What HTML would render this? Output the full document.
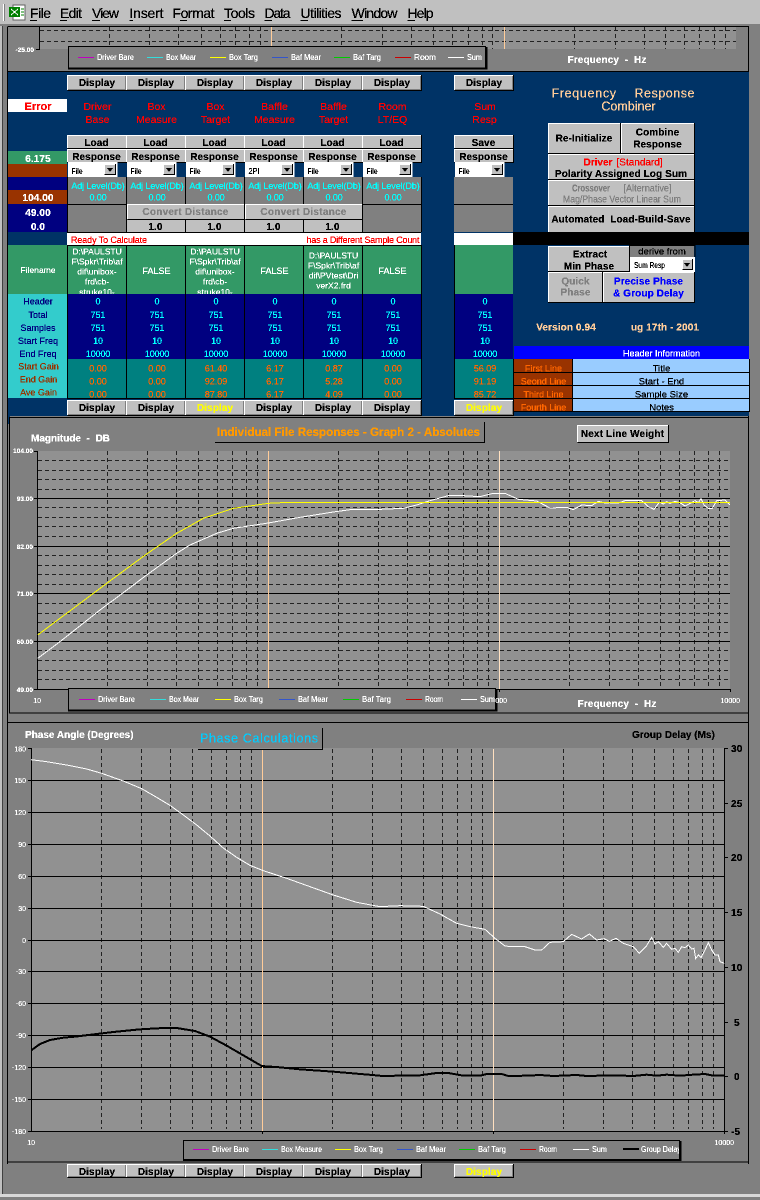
<!DOCTYPE html>
<html><head><meta charset="utf-8"><style>
html,body{margin:0;padding:0;background:#808080}
svg{display:block}
text{font-family:"Liberation Sans",sans-serif;font-size:10px;white-space:pre}
.m{font-size:14px;fill:#000}
.b{font-weight:bold;letter-spacing:.1px;text-anchor:middle;fill:#000}
.bl{font-weight:bold;fill:#000}
.r{fill:#ff0000;text-anchor:middle;font-size:10.5px}
.c{fill:#00ffff;text-anchor:middle;font-size:9px;letter-spacing:-.1px}
.w{fill:#fff;text-anchor:middle;font-size:8.5px}
.wb{fill:#fff;text-anchor:middle;font-weight:bold;letter-spacing:.1px}
.nv{fill:#000080;text-anchor:middle;font-size:9px}
.br{fill:#993300;text-anchor:middle;font-size:9px}
.o{fill:#ff6600;text-anchor:middle;font-size:9px}
.k{fill:#000;text-anchor:middle;font-size:9.500px}
.s{fill:#fff;font-size:6.500px;font-weight:bold}
.sa{fill:#fff;font-size:6.500px;font-weight:bold;text-anchor:end}
.l{fill:#fff;font-size:8px}
.f{fill:#000;font-size:8.500px}
.ax{fill:#fff;font-size:7px;text-anchor:end}
.rx{fill:#000;font-size:10px;font-weight:bold;letter-spacing:.2px}
</style></head><body>
<svg xmlns="http://www.w3.org/2000/svg" width="760" height="1200" viewBox="0 0 760 1200" shape-rendering="crispEdges">
<defs>
<filter id="crisp" x="0" y="0" width="760" height="1200" filterUnits="userSpaceOnUse" color-interpolation-filters="sRGB"><feComponentTransfer><feFuncA type="discrete" tableValues="0 1 1 1"/></feComponentTransfer></filter>
<clipPath id="fn"><rect x="67" y="245" width="354" height="49"/></clipPath>
<clipPath id="lg3"><rect x="183" y="1140" width="496" height="20"/></clipPath>
<g id="d"><rect width="59" height="15" fill="#c0c0c0"/><path d="M.5 15V.5H59" stroke="#fff" fill="none"/><path d="M.5 15.5H59.5V0" stroke="#000" fill="none"/><path d="M1 14.5H58.5V1" stroke="#808080" fill="none"/></g>
<g id="d2"><rect width="59" height="13" fill="#c0c0c0"/><path d="M.5 13V.5H59" stroke="#fff" fill="none"/><path d="M.5 13.5H59.5V0" stroke="#000" fill="none"/><path d="M1 12.500H58.5V1" stroke="#808080" fill="none"/></g>
<g id="l"><rect width="59" height="13" fill="#c0c0c0"/><path d="M.5 13V.5H59" stroke="#fff" fill="none"/><path d="M.5 13.5H59.5V0" stroke="#000" fill="none"/></g>
<g id="dd"><rect width="49.500" height="15" fill="#fff"/><rect x="36" y="2" width="11.500" height="11" fill="#c0c0c0"/><path d="M36.500 13V2.500H47" stroke="#fff" fill="none"/><path d="M36.500 12.500H47.500V2" stroke="#000" fill="none"/><path d="M39 6H45L42 10Z" fill="#000"/></g>
</defs>

<!-- base -->
<rect width="760" height="1200" fill="#808080"/>
<rect width="760" height="24" fill="#c0c0c0"/>
<rect y="24" width="760" height="2" fill="#808080"/>
<rect x="0" y="26" width="2" height="1168" fill="#c0c0c0"/>
<path d="M2.500 26V1194" stroke="#404040"/>
<path d="M7.500 27V1164" stroke="#000"/>
<path d="M7.500 26.500H749" stroke="#000"/>
<path d="M748.500 27V1164" stroke="#000"/>
<rect x="0" y="1194" width="760" height="3" fill="#d8d8d8"/>
<rect x="0" y="1197" width="760" height="3" fill="#808080"/>
<!-- grip + icon -->
<path d="M3.500 4V21" stroke="#fff"/><path d="M4.500 4V21" stroke="#808080"/>
<rect x="13" y="5" width="12" height="15" fill="#fff" stroke="#606060"/>
<rect x="9" y="7" width="11" height="10" fill="#008000"/>
<path d="M11 9L18 15M18 9L11 15" stroke="#fff" fill="none"/>
<path d="M21 9H24M21 12H24M21 15H24" stroke="#008000"/>

<!-- top chart -->
<rect x="40" y="27" width="696" height="22" fill="#919191"/>
<path d="M40 30.500H736M40 41.500H736" stroke="#222" stroke-dasharray="4 3"/>
<path d="M109.500 27V49M149.500 27V49M178.500 27V49M201.500 27V49M220.500 27V49M235.500 27V49M249.500 27V49M260.500 27V49M341.500 27V49M382.500 27V49M411.500 27V49M433.500 27V49M452.500 27V49M468.500 27V49M482.500 27V49M492.500 27V49M574.500 27V49M615.500 27V49M644.500 27V49M665.500 27V49M684.500 27V49M699.500 27V49M714.500 27V49M725.500 27V49" stroke="#222" stroke-dasharray="4 3"/>
<path d="M271.500 27V46M504.500 27V49" stroke="#ffcc99"/>
<path d="M39.500 27V49.500H36" stroke="#000" fill="none"/>
<rect x="68.500" y="46.500" width="417" height="22" fill="#808080" stroke="#000" stroke-width="1"/>
<path d="M68 68.500H486.500V47" stroke="#000" stroke-width="2" fill="none"/>
<g stroke-width="1" fill="none">
<path d="M78 57.500H94" stroke="#c000c0"/><path d="M147 57.500H163" stroke="#33dddd"/><path d="M210 57.500H226" stroke="#ffff00"/><path d="M272 57.500H288" stroke="#3355cc"/><path d="M334 57.500H350" stroke="#00cc00"/><path d="M395 57.500H411" stroke="#cc0000"/><path d="M448 57.500H464" stroke="#fff"/>
</g>
<path d="M8 71.500H749" stroke="#000"/>

<!-- navy panel -->
<rect x="8" y="72" width="741" height="344" fill="#003366"/>
<rect x="8" y="416" width="2" height="8" fill="#003366"/>

<!-- display row -->
<use href="#d" x="67" y="75"/><use href="#d" x="126" y="75"/><use href="#d" x="185" y="75"/><use href="#d" x="244" y="75"/><use href="#d" x="303" y="75"/><use href="#d" x="362" y="75"/><use href="#d" x="454" y="75"/>
<rect x="8" y="99" width="59" height="13" fill="#fff"/>

<!-- load / response -->
<use href="#l" x="67" y="135"/><use href="#l" x="126" y="135"/><use href="#l" x="185" y="135"/><use href="#l" x="244" y="135"/><use href="#l" x="303" y="135"/><use href="#l" x="362" y="135"/><use href="#l" x="454" y="135"/>
<use href="#l" x="67" y="149"/><use href="#l" x="126" y="149"/><use href="#l" x="185" y="149"/><use href="#l" x="244" y="149"/><use href="#l" x="303" y="149"/><use href="#l" x="362" y="149"/><use href="#l" x="454" y="149"/>
<use href="#dd" x="68" y="162"/><use href="#dd" x="127" y="162"/><use href="#dd" x="186" y="162"/><use href="#dd" x="245" y="162"/><use href="#dd" x="304" y="162"/><use href="#dd" x="363" y="162"/><use href="#dd" x="455" y="162"/>

<!-- left column -->
<rect x="8" y="151" width="59" height="13" fill="#339966"/>
<rect x="8" y="164" width="59" height="13" fill="#993300"/>
<rect x="8" y="177" width="59" height="13" fill="#000080"/>
<rect x="8" y="190" width="59" height="14" fill="#993300"/>
<rect x="8" y="204" width="59" height="28" fill="#000080"/>
<rect x="8" y="245" width="59" height="49" fill="#339966"/>
<rect x="8" y="294" width="59" height="104" fill="#33cccc"/>

<!-- adj level -->
<rect x="67" y="177" width="354" height="55" fill="#808080"/>
<rect x="454" y="177" width="59" height="55" fill="#808080"/>
<path d="M126.500 177V204M185.500 177V204M244.500 177V204M303.500 177V204M362.500 177V204M67.500 177V232M421.500 177V232M67 204.500H127M362 204.500H422M454 204.500H513" stroke="#000"/>
<rect x="127" y="204" width="117" height="15" fill="#c0c0c0"/><path d="M127.500 219V204.500H244" stroke="#fff" fill="none"/><path d="M127.500 219.500H244.500V204" stroke="#000" fill="none"/>
<rect x="245" y="204" width="117" height="15" fill="#c0c0c0"/><path d="M245.500 219V204.500H362" stroke="#fff" fill="none"/><path d="M245.500 219.500H362.500V204" stroke="#000" fill="none"/>
<rect x="127" y="220" width="235" height="12" fill="#c0c0c0"/>
<path d="M126.500 204V232M185.500 220V232M244.500 220V232M303.500 220V232M362.500 204V232" stroke="#000"/>

<!-- status row -->
<path d="M67 232.500H421" stroke="#000"/>
<rect x="67" y="233" width="354" height="12" fill="#fff"/>
<rect x="454" y="233" width="59" height="12" fill="#fff"/>
<rect x="513" y="232" width="236" height="13" fill="#000"/>

<!-- data table -->
<rect x="67" y="245" width="354" height="49" fill="#339966"/>
<rect x="67" y="294" width="354" height="65" fill="#000080"/>
<rect x="67" y="359" width="354" height="39" fill="#008080"/>
<path d="M67.500 245V398M126.500 245V398M185.500 245V398M244.500 245V398M303.500 245V398M362.500 245V398M421.500 245V399M67 245.500H422M67 398.500H422" stroke="#000"/>
<rect x="454" y="245" width="59" height="49" fill="#339966"/>
<rect x="454" y="294" width="59" height="65" fill="#000080"/>
<rect x="454" y="359" width="59" height="39" fill="#008080"/>
<path d="M454.500 245V398M454 398.500H514" stroke="#000"/>
<use href="#d" x="67" y="400"/><use href="#d" x="126" y="400"/><use href="#d" x="185" y="400"/><use href="#d" x="244" y="400"/><use href="#d" x="303" y="400"/><use href="#d" x="362" y="400"/><use href="#d" x="454" y="400"/>

<!-- right buttons -->
<g fill="#c0c0c0">
<rect x="548" y="123" width="72" height="30"/><rect x="621" y="123" width="73" height="30"/>
<rect x="548" y="154" width="146" height="25"/><rect x="548" y="180" width="146" height="25"/><rect x="548" y="206" width="146" height="26"/>
<rect x="548" y="246" width="81" height="25"/><rect x="629" y="245" width="65" height="12" fill="#808080"/>
<rect x="548" y="272" width="54" height="30"/><rect x="603" y="272" width="91" height="30"/>
</g>
<path d="M548.500 153V123.500H620M621.500 153V123.500H694M548.500 179V154.500H694M548.500 205V180.500H694M548.500 232V206.500H694M548.500 271V246.500H629M548.500 302V272.500H602M603.500 302V272.500H694" stroke="#fff" fill="none"/>
<path d="M620.500 123V153.500H548M694.500 123V153.500H621M694.500 154V179.500H548M694.500 180V205.500H548M694.500 206V232M694.500 272V302.500H603M602.500 272V302.500H548M629.500 246V271.500H548M629 245.500H695V257M629.500 245V257" stroke="#000" fill="none"/>
<rect x="630" y="257" width="65" height="15" fill="#fff"/>
<rect x="682" y="259" width="10" height="10" fill="#c0c0c0"/><path d="M682.500 269V259.500H692" stroke="#fff" fill="none"/><path d="M682.500 269.500H692.500V259" stroke="#000" fill="none"/><path d="M684 263H690L687 267Z" fill="#000"/>

<!-- header info -->
<rect x="514" y="346" width="235" height="13" fill="#0000ff"/>
<rect x="514" y="359" width="58" height="52" fill="#993300"/>
<rect x="573" y="359" width="176" height="52" fill="#99ccff"/>
<path d="M513.500 359V412M572.500 359V412M749.500 359V412M514 372.500H750M514 385.500H750M514 398.500H750M514 411.500H750" stroke="#000"/>
<path d="M513.500 398V416" stroke="#000"/>

<!-- chart 1 panel -->
<rect x="9.500" y="417.500" width="739" height="295.500" fill="#808080" stroke="#000"/>
<path d="M215 442.500H484.500V422" stroke="#000" fill="none"/>
<rect x="577" y="425" width="91" height="17" fill="#c0c0c0"/><path d="M577.500 442V425.500H668" stroke="#fff" fill="none"/><path d="M577.500 442.500H668.500V425" stroke="#000" fill="none"/>
<rect x="38" y="451" width="692" height="238" fill="#919191"/>
<path d="M38 460.500H730M38 470.500H730M38 479.500H730M38 489.500H730M38 507.500H730M38 517.500H730M38 526.500H730M38 536.500H730M38 555.500H730M38 565.500H730M38 574.500H730M38 584.500H730M38 603.500H730M38 613.500H730M38 622.500H730M38 632.500H730M38 650.500H730M38 660.500H730M38 670.500H730M38 679.500H730" stroke="#222" stroke-dasharray="4 3"/>
<path d="M107.500 451V689M147.500 451V689M176.500 451V689M198.500 451V689M217.500 451V689M232.500 451V689M246.500 451V689M257.500 451V689M338.500 451V689M378.500 451V689M407.500 451V689M429.500 451V689M448.500 451V689M463.500 451V689M477.500 451V689M488.500 451V689M569.500 451V689M609.500 451V689M638.500 451V689M660.500 451V689M679.500 451V689M694.500 451V689M708.500 451V689M719.500 451V689" stroke="#222" stroke-dasharray="4 3"/>
<path d="M38 498.500H730M38 546.500H730M38 593.500H730M38 641.500H730" stroke="#000"/>
<path d="M268.500 451V688" stroke="#ffcc99"/><path d="M499.500 451V689" stroke="#ffe0c0"/>
<path d="M37.500 451V690M34 451.500H38M34 689.500H38M34 498.500H38M34 546.500H38M34 593.500H38M34 641.500H38M38 689.500H730.500M730.500 689V692M499.500 689V692" stroke="#000" fill="none"/>
<g transform="translate(0,440) scale(.33333)" fill="none" stroke-width="1">
<path vector-effect="non-scaling-stroke" stroke="#fff" d="M113 655L180 605L300 510L370 458L440 405L530 340L570 315L650 280L700 265L805 249L900 232L1000 216L1050 209L1140 208"/>
<path vector-effect="non-scaling-stroke" stroke="#fff" transform="translate(1140,0)" d="M0 208L70 205L110 195L150 182L205 167L250 167L300 170L340 160L375 160L415 178L470 183L510 204L560 202L580 209L605 195L635 197L655 184L675 189L715 189L735 182L785 182L805 200L822 208L838 187L850 192L860 185L870 190L885 184L900 188L915 198L925 193L945 182L955 188L963 176L972 195L985 205L997 205L1010 182L1035 180L1050 195"/>
<path vector-effect="non-scaling-stroke" stroke="#ffff00" d="M113 585L200 520L320 430L440 342L530 280L610 235L700 205L805 190L865 187L2190 187"/>
</g>
<rect x="68.500" y="688.500" width="427" height="22" fill="#808080" stroke="#000"/>
<path d="M68 710.500H496.500V689" stroke="#000" stroke-width="2" fill="none"/>
<path d="M79 699.500H95" stroke="#c000c0"/><path d="M150 699.500H166" stroke="#33dddd"/><path d="M215 699.500H231" stroke="#ffff00"/><path d="M279 699.500H295" stroke="#3355cc"/><path d="M343 699.500H359" stroke="#00cc00"/><path d="M406 699.500H422" stroke="#cc0000"/><path d="M461 699.500H477" stroke="#fff"/>

<!-- chart 2 panel -->
<rect x="7.500" y="722.500" width="741" height="439.500" fill="#808080" stroke="#000"/>
<rect x="32" y="748" width="692" height="383" fill="#919191"/>
<path d="M101.500 749V1129M141.500 749V1129M170.500 749V1129M192.500 749V1129M211.500 749V1129M226.500 749V1129M240.500 749V1129M251.500 749V1129M332.500 749V1129M372.500 749V1129M401.500 749V1129M423.500 749V1129M442.500 749V1129M457.500 749V1129M471.500 749V1129M482.500 749V1129M563.500 749V1129M603.500 749V1129M632.500 749V1129M654.500 749V1129M673.500 749V1129M688.500 749V1129M702.500 749V1129M713.500 749V1129" stroke="#222" stroke-dasharray="4 3"/>
<path d="M32 780.500H724M32 812.500H724M32 844.500H724M32 876.500H724M32 908.500H724M32 940.500H724M32 971.500H724M32 1003.500H724M32 1035.500H724M32 1067.500H724M32 1099.500H724" stroke="#000"/>
<path d="M262.500 749V1131" stroke="#ffcc99"/><path d="M493.500 749V1131" stroke="#ffe0c0"/>
<path d="M31.500 748V1132M28 748.500H32M28 780.500H32M28 812.500H32M28 844.500H32M28 876.500H32M28 908.500H32M28 940.500H32M28 971.500H32M28 1003.500H32M28 1035.500H32M28 1067.500H32M28 1099.500H32M28 1131.500H724.500M724.500 748V1134M724 748.500H728M724 803.500H728M724 857.500H728M724 912.500H728M724 967.500H728M724 1022.500H728M724 1076.500H728M724 1131.500H728M262.500 1131V1134M493.500 1131V1134" stroke="#000" fill="none"/>
<path d="M198 749.500H322.500V728" stroke="#000" fill="none"/>
<g transform="translate(0,720) scale(.33333)" fill="none">
<path vector-effect="non-scaling-stroke" stroke="#fff" d="M93 119L140 125L200 135L260 147L305 160L370 183L425 206L470 232L510 256L550 285L590 315L630 348L670 384L710 412L750 436L790 452L860 475L930 500L1000 525L1070 547L1140 560"/>
<path vector-effect="non-scaling-stroke" stroke="#fff" transform="translate(1140,0)" d="M0 560L60 557L130 559L180 582L230 610L270 620L315 628L345 655L375 678L395 680L435 680L465 690L485 690L510 667L550 665L575 643L605 657L628 642L650 660L672 656L688 664L708 655L730 670L760 680L778 700L798 680L815 652L825 672L835 665L850 682L860 670L875 688L885 685L895 697L905 680L915 683L925 675L935 687L942 685L947 716L955 705L963 713L975 690L985 668L995 690L1005 705L1015 705L1020 725L1033 730"/>
</g>
<g transform="translate(0,980) scale(.33333)" fill="none">
<path vector-effect="non-scaling-stroke" stroke="#000" stroke-width="2" d="M95 210L120 192L150 180L190 173L225 170L265 165L340 156L420 148L490 144L530 144L585 153L630 170L680 197L730 226L785 258L840 262L900 268L1000 275L1140 287"/>
<path vector-effect="non-scaling-stroke" stroke="#000" stroke-width="2" transform="translate(1140,0)" d="M0 288L120 286L170 279L205 279L250 287L300 287L320 282L365 282L385 288L440 287L480 285L520 288L590 285L620 288L700 286L760 288L800 284L830 287L860 284L900 287L940 284L975 282L1000 287L1033 287"/>
</g>
<rect x="183.500" y="1140.500" width="496" height="19" fill="#808080" stroke="#000"/>
<path d="M183 1160H680.500V1141" stroke="#000" stroke-width="2" fill="none"/>
<path d="M193 1149.500H209" stroke="#c000c0"/><path d="M262 1149.500H278" stroke="#33dddd"/><path d="M335 1149.500H351" stroke="#ffff00"/><path d="M397 1149.500H413" stroke="#3355cc"/><path d="M459 1149.500H475" stroke="#00cc00"/><path d="M520 1149.500H536" stroke="#cc0000"/><path d="M573 1149.500H589" stroke="#fff"/><path d="M623 1149H639" stroke="#000" stroke-width="2"/>

<use href="#d2" x="67" y="1164"/><use href="#d2" x="126" y="1164"/><use href="#d2" x="185" y="1164"/><use href="#d2" x="244" y="1164"/><use href="#d2" x="303" y="1164"/><use href="#d2" x="362" y="1164"/><use href="#d2" x="454" y="1164"/>

<!-- TEXT -->
<g filter="url(#crisp)" shape-rendering="auto">
<text class="m" x="30" y="18" textLength="21">File</text>
<text class="m" x="60" y="18" textLength="22">Edit</text>
<text class="m" x="92" y="18" textLength="27">View</text>
<text class="m" x="129.500" y="18" textLength="34">Insert</text>
<text class="m" x="172.500" y="18" textLength="42">Format</text>
<text class="m" x="224" y="18" textLength="31">Tools</text>
<text class="m" x="264.500" y="18" textLength="26">Data</text>
<text class="m" x="300.500" y="18" textLength="41">Utilities</text>
<text class="m" x="351.500" y="18" textLength="46">Window</text>
<text class="m" x="407.500" y="18" textLength="26">Help</text>

<text class="sa" x="34" y="52">-25.00</text>
<g lengthAdjust="spacingAndGlyphs">
<text class="l" x="97" y="60" textLength="37" lengthAdjust="spacingAndGlyphs">Driver Bare</text><text class="l" x="166" y="60" textLength="30" lengthAdjust="spacingAndGlyphs">Box Mear</text><text class="l" x="229" y="60" textLength="29" lengthAdjust="spacingAndGlyphs">Box Targ</text><text class="l" x="291" y="60" textLength="30" lengthAdjust="spacingAndGlyphs">Baf Mear</text><text class="l" x="353" y="60" textLength="28" lengthAdjust="spacingAndGlyphs">Baf Targ</text><text class="l" x="414" y="60" textLength="22" lengthAdjust="spacingAndGlyphs">Room</text><text class="l" x="467" y="60" textLength="15" lengthAdjust="spacingAndGlyphs">Sum</text>
</g>
<text class="wb" x="607" y="63">Frequency  -  Hz</text>

<text class="b" x="97" y="86">Display</text><text class="b" x="156" y="86">Display</text><text class="b" x="215" y="86">Display</text><text class="b" x="274" y="86">Display</text><text class="b" x="333" y="86">Display</text><text class="b" x="392" y="86">Display</text><text class="b" x="484" y="86">Display</text>

<text x="38" y="110" style="font-weight:bold;font-size:11px;fill:#f00;text-anchor:middle">Error</text>
<text class="r" x="97.500" y="110">Driver</text><text class="r" x="97.500" y="123">Base</text>
<text class="r" x="156.500" y="110">Box</text><text class="r" x="156.500" y="123">Measure</text>
<text class="r" x="215.500" y="110">Box</text><text class="r" x="215.500" y="123">Target</text>
<text class="r" x="274.500" y="110">Baffle</text><text class="r" x="274.500" y="123">Measure</text>
<text class="r" x="333.500" y="110">Baffle</text><text class="r" x="333.500" y="123">Target</text>
<text class="r" x="392.500" y="110">Room</text><text class="r" x="392.500" y="123">LT/EQ</text>
<text class="r" x="485" y="110">Sum</text><text class="r" x="484.500" y="123">Resp</text>

<text class="b" x="96.500" y="146">Load</text><text class="b" x="155.500" y="146">Load</text><text class="b" x="214.500" y="146">Load</text><text class="b" x="273.500" y="146">Load</text><text class="b" x="332.500" y="146">Load</text><text class="b" x="391.500" y="146">Load</text><text class="b" x="483.500" y="146">Save</text>
<text class="b" x="96.500" y="160">Response</text><text class="b" x="155.500" y="160">Response</text><text class="b" x="214.500" y="160">Response</text><text class="b" x="273.500" y="160">Response</text><text class="b" x="332.500" y="160">Response</text><text class="b" x="391.500" y="160">Response</text><text class="b" x="483.500" y="160">Response</text>
<text class="f" x="71.500" y="174" textLength="11" lengthAdjust="spacingAndGlyphs">File</text><text class="f" x="130.500" y="174" textLength="11" lengthAdjust="spacingAndGlyphs">File</text><text class="f" x="189.500" y="174" textLength="11" lengthAdjust="spacingAndGlyphs">File</text><text class="f" x="248.500" y="174" textLength="11" lengthAdjust="spacingAndGlyphs">2PI</text><text class="f" x="307.500" y="174" textLength="11" lengthAdjust="spacingAndGlyphs">File</text><text class="f" x="366.500" y="174" textLength="11" lengthAdjust="spacingAndGlyphs">File</text><text class="f" x="458.500" y="174" textLength="11" lengthAdjust="spacingAndGlyphs">File</text>

<text class="wb" x="38" y="162">6.175</text><text class="wb" x="38" y="201">104.00</text><text class="wb" x="38" y="216">49.00</text><text class="wb" x="38" y="230">0.0</text>

<text class="c" x="98" y="189">Adj Level(Db)</text><text class="c" x="157" y="189">Adj Level(Db)</text><text class="c" x="216" y="189">Adj Level(Db)</text><text class="c" x="275" y="189">Adj Level(Db)</text><text class="c" x="334" y="189">Adj Level(Db)</text><text class="c" x="393" y="189">Adj Level(Db)</text>
<text class="c" x="98" y="200.500">0.00</text><text class="c" x="157" y="200.500">0.00</text><text class="c" x="216" y="200.500">0.00</text><text class="c" x="275" y="200.500">0.00</text><text class="c" x="334" y="200.500">0.00</text><text class="c" x="393" y="200.500">0.00</text>
<text class="b" x="185.500" y="215" style="fill:#808080;letter-spacing:.25px">Convert Distance</text><text class="b" x="303.500" y="215" style="fill:#808080;letter-spacing:.25px">Convert Distance</text>
<text class="b" x="155.500" y="230">1.0</text><text class="b" x="214.500" y="230">1.0</text><text class="b" x="273.500" y="230">1.0</text><text class="b" x="332.500" y="230">1.0</text>

<text x="71" y="243" style="fill:#f00;font-size:9px" textLength="76">Ready To Calculate</text>
<text x="306.500" y="243" style="fill:#f00;font-size:9px" textLength="113">has a Different Sample Count</text>

<text class="w" x="38" y="273">Filename</text>
<g clip-path="url(#fn)">
<text class="w" x="97" y="254.500">D:\PAULSTU</text><text class="w" x="97" y="264.500">F\Spkr\Trib\af</text><text class="w" x="97" y="274.500">dif\unibox-</text><text class="w" x="97" y="284.500">frd\cb-</text><text class="w" x="97" y="295">struke10-</text>
<text class="w" x="215" y="254.500">D:\PAULSTU</text><text class="w" x="215" y="264.500">F\Spkr\Trib\af</text><text class="w" x="215" y="274.500">dif\unibox-</text><text class="w" x="215" y="284.500">frd\cb-</text><text class="w" x="215" y="295">struke10-</text>
<text class="w" x="333.500" y="258.500">D:\PAULSTU</text><text class="w" x="333.500" y="268.500">F\Spkr\Trib\af</text><text class="w" x="333.500" y="278.500">dif\PVtest\Dri</text><text class="w" x="333.500" y="288.500">verX2.frd</text>
</g>
<text class="w" x="156.500" y="274" style="font-size:9px">FALSE</text><text class="w" x="274.500" y="274" style="font-size:9px">FALSE</text><text class="w" x="392.500" y="274" style="font-size:9px">FALSE</text>

<text class="nv" x="38" y="304.500">Header</text><text class="nv" x="38" y="318">Total</text><text class="nv" x="38" y="331">Samples</text><text class="nv" x="38" y="344">Start Freq</text><text class="nv" x="38" y="357">End Freq</text>
<text class="br" x="38.500" y="369.500">Start Gain</text><text class="br" x="38.500" y="382.500">End Gain</text><text class="br" x="38.500" y="395.500">Ave Gain</text>

<text class="c" x="98" y="304.500">0</text><text class="c" x="157" y="304.500">0</text><text class="c" x="216" y="304.500">0</text><text class="c" x="275" y="304.500">0</text><text class="c" x="334" y="304.500">0</text><text class="c" x="393" y="304.500">0</text><text class="c" x="485" y="304.500">0</text>
<text class="c" x="98" y="318">751</text><text class="c" x="157" y="318">751</text><text class="c" x="216" y="318">751</text><text class="c" x="275" y="318">751</text><text class="c" x="334" y="318">751</text><text class="c" x="393" y="318">751</text><text class="c" x="485" y="318">751</text>
<text class="c" x="98" y="331">751</text><text class="c" x="157" y="331">751</text><text class="c" x="216" y="331">751</text><text class="c" x="275" y="331">751</text><text class="c" x="334" y="331">751</text><text class="c" x="393" y="331">751</text><text class="c" x="485" y="331">751</text>
<text class="c" x="98" y="344">10</text><text class="c" x="157" y="344">10</text><text class="c" x="216" y="344">10</text><text class="c" x="275" y="344">10</text><text class="c" x="334" y="344">10</text><text class="c" x="393" y="344">10</text><text class="c" x="485" y="344">10</text>
<text class="c" x="98" y="357">10000</text><text class="c" x="157" y="357">10000</text><text class="c" x="216" y="357">10000</text><text class="c" x="275" y="357">10000</text><text class="c" x="334" y="357">10000</text><text class="c" x="393" y="357">10000</text><text class="c" x="485" y="357">10000</text>
<text class="o" x="98" y="371.500">0.00</text><text class="o" x="157" y="371.500">0.00</text><text class="o" x="216" y="371.500">61.40</text><text class="o" x="275" y="371.500">6.17</text><text class="o" x="334" y="371.500">0.87</text><text class="o" x="393" y="371.500">0.00</text><text class="o" x="485" y="371.500">56.09</text>
<text class="o" x="98" y="384.500">0.00</text><text class="o" x="157" y="384.500">0.00</text><text class="o" x="216" y="384.500">92.09</text><text class="o" x="275" y="384.500">6.17</text><text class="o" x="334" y="384.500">5.28</text><text class="o" x="393" y="384.500">0.00</text><text class="o" x="485" y="384.500">91.19</text>
<text class="o" x="98" y="397.500">0.00</text><text class="o" x="157" y="397.500">0.00</text><text class="o" x="216" y="397.500">87.80</text><text class="o" x="275" y="397.500">6.17</text><text class="o" x="334" y="397.500">4.09</text><text class="o" x="393" y="397.500">0.00</text><text class="o" x="485" y="397.500">85.72</text>
<text class="b" x="97" y="411">Display</text><text class="b" x="156" y="411">Display</text><text class="b" x="215" y="411" style="fill:#ff0">Display</text><text class="b" x="274" y="411">Display</text><text class="b" x="333" y="411">Display</text><text class="b" x="392" y="411">Display</text><text class="b" x="484" y="411" style="fill:#ff0">Display</text>

<text x="551.500" y="97.500" style="font-size:12.500px;fill:#ffcc99" textLength="64.500">Frequency</text><text x="634.500" y="97.500" style="font-size:12.500px;fill:#ffcc99" textLength="60">Response</text>
<text x="628.500" y="110.500" style="font-size:12.500px;fill:#ffcc99;text-anchor:middle">Combiner</text>
<text class="b" x="584" y="141.500">Re-Initialize</text>
<text class="b" x="657.500" y="135.500">Combine</text><text class="b" x="657.500" y="147.500">Response</text>
<text class="bl" x="583.500" y="165.500" style="fill:#f00">Driver</text><text x="616.500" y="165.500" style="fill:#f00">[Standard]</text>
<text class="b" x="621" y="177">Polarity Assigned Log Sum</text>
<text class="bl" x="572" y="191.500" style="fill:#808080" textLength="38" lengthAdjust="spacingAndGlyphs">Crossover</text><text x="623.500" y="191.500" style="fill:#808080" textLength="48" lengthAdjust="spacingAndGlyphs">[Alternative]</text>
<text x="563" y="202.500" style="fill:#808080" textLength="118" lengthAdjust="spacingAndGlyphs">Mag/Phase Vector Linear Sum</text>
<text class="b" x="621" y="222.500">Automated  Load-Build-Save</text>
<text class="b" x="590" y="257.500">Extract</text><text class="b" x="589" y="269.500">Min Phase</text>
<text class="k" x="662" y="254.500">derive from</text>
<text class="f" x="634" y="268" textLength="31" lengthAdjust="spacingAndGlyphs">Sum Resp</text>
<text class="b" x="575.500" y="284.500" style="fill:#808080">Quick</text><text class="b" x="575.500" y="295.500" style="fill:#808080">Phase</text>
<text class="b" x="648.500" y="284.500" style="fill:#0000ff">Precise Phase</text><text class="b" x="648.500" y="296.500" style="fill:#0000ff">&amp; Group Delay</text>
<text class="b" x="566" y="330.500" style="fill:#ffcc99">Version 0.94</text><text class="b" x="665" y="330.500" style="fill:#ffcc99">ug 17th - 2001</text>
<text class="w" x="661.500" y="356.500" style="font-size:9px">Header Information</text>
<text class="o" x="543.500" y="371.500">First Line</text><text class="o" x="543.500" y="384.500">Seond Line</text><text class="o" x="543.500" y="397.500">Third Line</text><text class="o" x="543.500" y="410.500">Fourth Line</text>
<text class="k" x="661.500" y="371.500">Title</text><text class="k" x="661.500" y="384.500">Start - End</text><text class="k" x="661.500" y="397.500">Sample Size</text><text class="k" x="661.500" y="410.500">Notes</text>

<text class="bl" x="31" y="441.500" style="fill:#fff">Magnitude  -  DB</text>
<text x="217" y="436" style="font-weight:bold;font-size:11.500px;fill:#ff9900" textLength="263" lengthAdjust="spacingAndGlyphs">Individual File Responses - Graph 2 - Absolutes</text>
<text class="b" x="622.500" y="437" style="letter-spacing:.15px">Next Line Weight</text>
<text class="sa" x="33" y="453">104.00</text><text class="sa" x="33" y="501">93.00</text><text class="sa" x="33" y="549">82.00</text><text class="sa" x="33" y="596">71.00</text><text class="sa" x="33" y="644">60.00</text><text class="sa" x="33" y="692">49.00</text>
<text class="ax" x="41" y="703">10</text><text class="ax" x="507" y="703">000</text><text class="ax" x="740" y="703">10000</text>
<text class="wb" x="617" y="707">Frequency  -  Hz</text>
<text class="l" x="98" y="702" textLength="37" lengthAdjust="spacingAndGlyphs">Driver Bare</text><text class="l" x="169" y="702" textLength="30" lengthAdjust="spacingAndGlyphs">Box Mear</text><text class="l" x="234" y="702" textLength="29" lengthAdjust="spacingAndGlyphs">Box Targ</text><text class="l" x="298" y="702" textLength="30" lengthAdjust="spacingAndGlyphs">Baf Mear</text><text class="l" x="362" y="702" textLength="29" lengthAdjust="spacingAndGlyphs">Baf Targ</text><text class="l" x="425" y="702" textLength="18" lengthAdjust="spacingAndGlyphs">Room</text><text class="l" x="480" y="702" textLength="15" lengthAdjust="spacingAndGlyphs">Sum</text>

<text class="bl" x="25" y="738" style="fill:#fff">Phase Angle (Degrees)</text>
<text x="200" y="742.500" style="font-size:12.500px;fill:#00ccff" textLength="118">Phase Calculations</text>
<text class="bl" x="632" y="738">Group Delay (Ms)</text>
<text class="ax" x="26" y="751.500">180</text><text class="ax" x="26" y="783">150</text><text class="ax" x="26" y="815">120</text><text class="ax" x="26" y="847">90</text><text class="ax" x="26" y="879">60</text><text class="ax" x="26" y="911">30</text><text class="ax" x="26" y="943">0</text><text class="ax" x="26" y="974">-30</text><text class="ax" x="26" y="1006">-60</text><text class="ax" x="26" y="1038">-90</text><text class="ax" x="26" y="1070">-120</text><text class="ax" x="26" y="1102">-150</text><text class="ax" x="26" y="1134">-180</text>
<text class="rx" x="731" y="752">30</text><text class="rx" x="731" y="807">25</text><text class="rx" x="731" y="861">20</text><text class="rx" x="731" y="916">15</text><text class="rx" x="731" y="971">10</text><text class="rx" x="734" y="1026">5</text><text class="rx" x="734" y="1080">0</text><text class="rx" x="731" y="1135">-5</text>
<text class="ax" x="35" y="1145">10</text><text class="ax" x="734" y="1145">10000</text>
<g clip-path="url(#lg3)">
<text class="l" x="212" y="1152" textLength="37" lengthAdjust="spacingAndGlyphs">Driver Bare</text><text class="l" x="281" y="1152" textLength="41" lengthAdjust="spacingAndGlyphs">Box Measure</text><text class="l" x="354" y="1152" textLength="29" lengthAdjust="spacingAndGlyphs">Box Targ</text><text class="l" x="416" y="1152" textLength="30" lengthAdjust="spacingAndGlyphs">Baf Mear</text><text class="l" x="478" y="1152" textLength="28" lengthAdjust="spacingAndGlyphs">Baf Targ</text><text class="l" x="539" y="1152" textLength="18" lengthAdjust="spacingAndGlyphs">Room</text><text class="l" x="592" y="1152" textLength="15" lengthAdjust="spacingAndGlyphs">Sum</text><text class="l" x="641" y="1152" textLength="40" lengthAdjust="spacingAndGlyphs">Group Delay</text>
</g>
<text class="b" x="97" y="1175">Display</text><text class="b" x="156" y="1175">Display</text><text class="b" x="215" y="1175">Display</text><text class="b" x="274" y="1175">Display</text><text class="b" x="333" y="1175">Display</text><text class="b" x="392" y="1175">Display</text><text class="b" x="484" y="1175" style="fill:#ff0">Display</text>
</g>
<!-- menu underlines -->
<path d="M30 20.500H37M60 20.500H67M92 20.500H100M129.500 20.500H133M180 20.500H187M224 20.500H231M264.500 20.500H272M300.500 20.500H308M351.500 20.500H363M407.500 20.500H415" stroke="#000"/>
</svg>
</body></html>
